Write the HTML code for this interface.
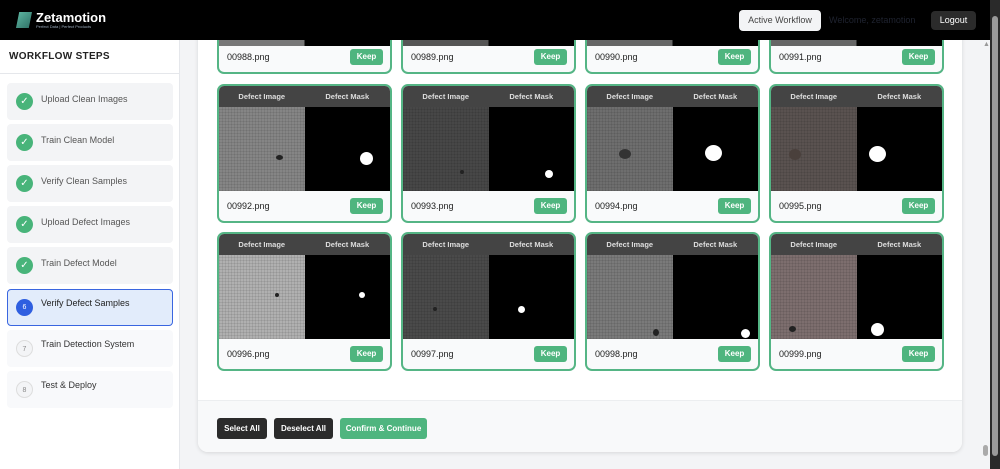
<!DOCTYPE html>
<html><head><meta charset="utf-8"><style>
*{box-sizing:border-box;margin:0;padding:0}
body{width:1000px;height:469px;overflow:hidden;font-family:"Liberation Sans",sans-serif;background:#f3f4f6;position:relative}
.hdr{position:absolute;left:0;top:0;width:990px;height:40px;background:#000;z-index:5}
.logo{position:absolute;left:16px;top:12px;width:16px;height:16px;background:linear-gradient(135deg,#5fb9a5,#2d6e63);clip-path:polygon(20% 0,100% 0,80% 100%,0 100%)}
.brand{position:absolute;left:36px;top:10px;color:#fff;font-size:13px;font-weight:bold}
.tag{position:absolute;left:36px;top:24px;color:#9ab;font-size:4px}
.aw{position:absolute;left:739px;top:10px;width:82px;height:21px;background:#f3f4f6;border-radius:4px;font-size:9px;color:#444;text-align:center;line-height:21px}
.wel{position:absolute;left:829px;top:15px;font-size:9px;color:#1f2330}
.lo{position:absolute;left:931px;top:11px;width:45px;height:19px;background:#2b2b2b;border-radius:4px;color:#fff;font-size:9px;text-align:center;line-height:19px}
.side{position:absolute;left:0;top:40px;width:180px;height:429px;background:#fff;border-right:1px solid #e5e7eb}
.sh{height:34px;border-bottom:1px solid #e5e7eb;font-size:10px;font-weight:bold;color:#222;padding:11px 9px;letter-spacing:.3px}
.st{position:absolute;left:7px;width:166px;height:37px;background:#f3f4f6;border-radius:4px;font-size:9px;color:#555}
.st .c{position:absolute;left:9px;top:10px;width:17px;height:17px;border-radius:50%;background:#48b47a;color:#fff;font-size:10px;text-align:center;line-height:17px}
.st .t{position:absolute;left:34px;top:11px}
.st.a{background:#e2ecfb;border:1.5px solid #3a66e0;color:#222}
.st.a .c{background:#2f5fe0;font-size:7px}
.st.p{background:#f8f9fb;color:#333}
.st.p .c{background:#f3f4f6;border:1px solid #ddd;color:#888;font-size:7px}
.card{position:absolute;left:198px;top:20px;width:764px;height:432px;background:#fff;border-radius:10px;box-shadow:0 1px 4px rgba(0,0,0,.12);overflow:hidden}
.foot{position:absolute;left:0;bottom:0;width:100%;height:52px;background:#f8f9fa;border-top:1px solid #eceef0}
.b{position:absolute;top:17px;height:21px;border-radius:3px;color:#fff;font-size:8px;font-weight:bold;text-align:center;line-height:21px}
.it{position:absolute;width:175px;border:2px solid #55b585;border-radius:7px;background:#f9fafb;overflow:hidden}
.ih{height:21px;background:#444;display:flex;color:#ddd;font-size:7.5px;font-weight:bold}
.ih span{flex:1;text-align:center;line-height:21px}
.im{height:84px;display:flex}
.im div{flex:1;position:relative}
.im .m{background:#000}
.fn{position:absolute;left:8px;bottom:10px;font-size:9px;color:#222}
.kp{position:absolute;right:7px;bottom:7px;width:33px;height:16px;background:#4fb57f;color:#fff;font-size:8px;font-weight:bold;text-align:center;line-height:16px;border-radius:3px}
.dot{position:absolute;background:#fff;border-radius:50%}
.sp{position:absolute;background:#222;border-radius:50%}
.tex{background-image:repeating-linear-gradient(0deg,rgba(0,0,0,.08) 0 1px,transparent 1px 3px),repeating-linear-gradient(90deg,rgba(0,0,0,.08) 0 1px,transparent 1px 3px)}
</style></head><body>
<div class="hdr"><div class="logo"></div><div class="brand">Zetamotion</div><div class="tag">Perfect Data | Perfect Products</div>
<div class="aw">Active Workflow</div><div class="wel">Welcome, zetamotion</div><div class="lo">Logout</div></div>
<div class="side"><div class="sh">WORKFLOW STEPS</div>
<div class="st" style="top:43px"><div class="c">✓</div><div class="t">Upload Clean Images</div></div>
<div class="st" style="top:84px"><div class="c">✓</div><div class="t">Train Clean Model</div></div>
<div class="st" style="top:125px"><div class="c">✓</div><div class="t">Verify Clean Samples</div></div>
<div class="st" style="top:166px"><div class="c">✓</div><div class="t">Upload Defect Images</div></div>
<div class="st" style="top:207px"><div class="c">✓</div><div class="t">Train Defect Model</div></div>
<div class="st a" style="top:249px"><div class="c" style="left:8px;top:9px">6</div><div class="t" style="top:8px;left:33px">Verify Defect Samples</div></div>
<div class="st p" style="top:290px"><div class="c">7</div><div class="t" style="top:9px">Train Detection System</div></div>
<div class="st p" style="top:331px"><div class="c">8</div><div class="t" style="top:9px">Test &amp; Deploy</div></div>
</div>
<div class="card">
<div class="it" style="left:19px;top:-20px;height:74px"><div style="height:44px;background:linear-gradient(90deg,#777 50%,#000 50%)"></div><div class="fn">00988.png</div><div class="kp">Keep</div></div>
<div class="it" style="left:203px;top:-20px;height:74px"><div style="height:44px;background:linear-gradient(90deg,#555 50%,#000 50%)"></div><div class="fn">00989.png</div><div class="kp">Keep</div></div>
<div class="it" style="left:387px;top:-20px;height:74px"><div style="height:44px;background:linear-gradient(90deg,#666 50%,#000 50%)"></div><div class="fn">00990.png</div><div class="kp">Keep</div></div>
<div class="it" style="left:571px;top:-20px;height:74px"><div style="height:44px;background:linear-gradient(90deg,#666 50%,#000 50%)"></div><div class="fn">00991.png</div><div class="kp">Keep</div></div>

<div class="it" style="left:19px;top:64px;height:139px"><div class="ih"><span>Defect Image</span><span>Defect Mask</span></div><div class="im"><div class="tex" style="background-color:#858585"><div class="sp" style="left:57px;top:48px;width:7px;height:5px"></div></div><div class="m"><div class="dot" style="left:55px;top:45px;width:13px;height:13px"></div></div></div><div class="fn">00992.png</div><div class="kp">Keep</div></div>
<div class="it" style="left:203px;top:64px;height:139px"><div class="ih"><span>Defect Image</span><span>Defect Mask</span></div><div class="im"><div class="tex" style="background-color:#474747"><div class="sp" style="left:57px;top:63px;width:4px;height:4px"></div></div><div class="m"><div class="dot" style="left:56px;top:63px;width:8px;height:8px"></div></div></div><div class="fn">00993.png</div><div class="kp">Keep</div></div>
<div class="it" style="left:387px;top:64px;height:139px"><div class="ih"><span>Defect Image</span><span>Defect Mask</span></div><div class="im"><div class="tex" style="background-color:#6e6e6e"><div class="sp" style="left:32px;top:42px;width:12px;height:10px;background:#333"></div></div><div class="m"><div class="dot" style="left:32px;top:38px;width:17px;height:16px"></div></div></div><div class="fn">00994.png</div><div class="kp">Keep</div></div>
<div class="it" style="left:571px;top:64px;height:139px"><div class="ih"><span>Defect Image</span><span>Defect Mask</span></div><div class="im"><div class="tex" style="background-color:#5a5250"><div class="sp" style="left:18px;top:42px;width:12px;height:11px;background:#4a403c"></div></div><div class="m"><div class="dot" style="left:12px;top:39px;width:17px;height:16px"></div></div></div><div class="fn">00995.png</div><div class="kp">Keep</div></div>

<div class="it" style="left:19px;top:212px;height:139px"><div class="ih"><span>Defect Image</span><span>Defect Mask</span></div><div class="im"><div class="tex" style="background-color:#b0b0b0"><div class="sp" style="left:56px;top:38px;width:4px;height:4px"></div></div><div class="m"><div class="dot" style="left:54px;top:37px;width:6px;height:6px"></div></div></div><div class="fn">00996.png</div><div class="kp">Keep</div></div>
<div class="it" style="left:203px;top:212px;height:139px"><div class="ih"><span>Defect Image</span><span>Defect Mask</span></div><div class="im"><div class="tex" style="background-color:#4a4a4a"><div class="sp" style="left:30px;top:52px;width:4px;height:4px"></div></div><div class="m"><div class="dot" style="left:29px;top:51px;width:7px;height:7px"></div></div></div><div class="fn">00997.png</div><div class="kp">Keep</div></div>
<div class="it" style="left:387px;top:212px;height:139px"><div class="ih"><span>Defect Image</span><span>Defect Mask</span></div><div class="im"><div class="tex" style="background-color:#7a7a7a"><div class="sp" style="left:66px;top:74px;width:6px;height:7px"></div></div><div class="m"><div class="dot" style="left:68px;top:74px;width:9px;height:9px"></div></div></div><div class="fn">00998.png</div><div class="kp">Keep</div></div>
<div class="it" style="left:571px;top:212px;height:139px"><div class="ih"><span>Defect Image</span><span>Defect Mask</span></div><div class="im"><div class="tex" style="background-color:#7d6e6e"><div class="sp" style="left:18px;top:71px;width:7px;height:6px"></div></div><div class="m"><div class="dot" style="left:14px;top:68px;width:13px;height:13px"></div></div></div><div class="fn">00999.png</div><div class="kp">Keep</div></div>

<div class="foot">
<div class="b" style="left:19px;width:50px;background:#2b2b2b">Select All</div>
<div class="b" style="left:76px;width:59px;background:#2b2b2b">Deselect All</div>
<div class="b" style="left:142px;width:87px;background:#4fb57f">Confirm &amp; Continue</div>
</div></div>
<div style="position:absolute;left:983px;top:445px;width:5px;height:11px;background:#aaa;border-radius:3px"></div>
<div style="position:absolute;left:983px;top:41px;color:#999;font-size:7px">▲</div>
<div style="position:absolute;left:990px;top:0;width:10px;height:469px;background:#2a2a2a;z-index:6"></div>
<div style="position:absolute;left:992px;top:16px;width:6px;height:440px;background:#999;border-radius:3px;z-index:7"></div>
</body></html>
